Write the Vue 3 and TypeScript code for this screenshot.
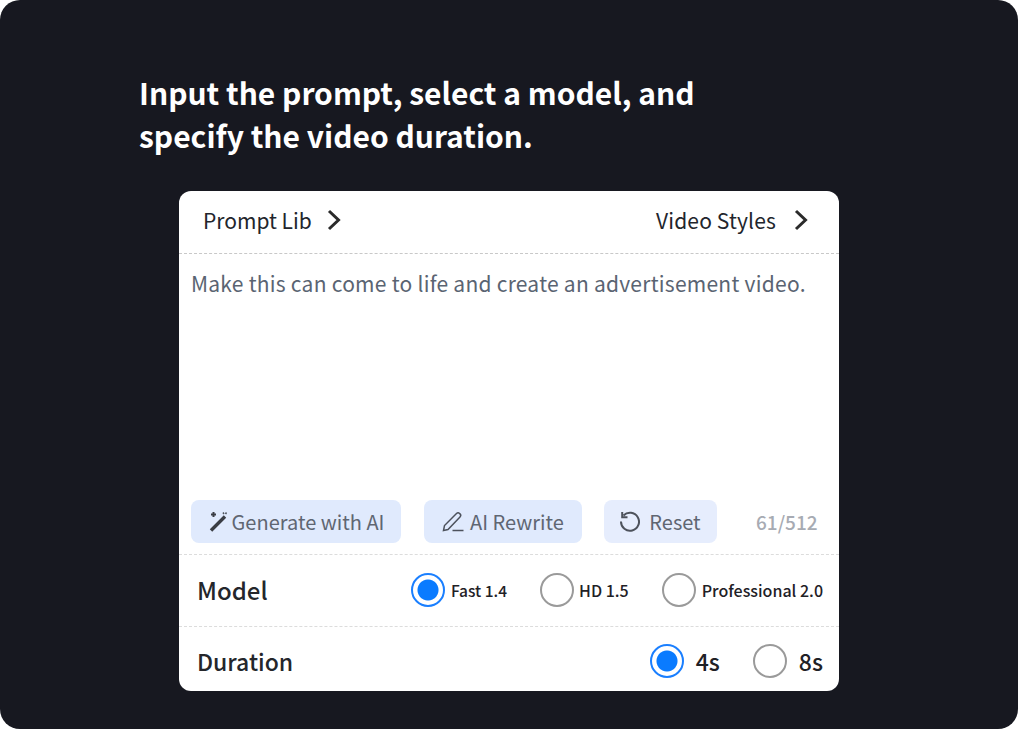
<script setup lang="ts">
const models = [
  { label: 'Fast 1.4', on: true },
  { label: 'HD 1.5', on: false },
  { label: 'Professional 2.0', on: false },
]
const durations = [
  { label: '4s', on: true },
  { label: '8s', on: false },
]
</script>

<template>
  <main class="frame">
    <h1 class="title">Input the prompt, select a model, and<br />specify the video duration.</h1>
    <section class="card">
      <header class="head">
        <div class="link">
          <span>Prompt Lib</span>
          <svg class="chev" viewBox="0 0 16 24"><path d="M3 3 12.500 12 3 21" /></svg>
        </div>
        <div class="link">
          <span>Video Styles</span>
          <svg class="chev" viewBox="0 0 16 24"><path d="M3 3 12.500 12 3 21" /></svg>
        </div>
      </header>
      <div class="prompt">
        <p class="text">Make this can come to life and create an advertisement video.</p>
        <div class="tools">
          <button class="btn b1">
            <svg class="ico i1" viewBox="0 0 20 24">
              <path class="thick" d="M3 21.500 17 7.500" />
              <path class="spark" d="M5.500 3v5M3 5.500h5" />
              <path class="thin" d="M15 3.500l1 1.500M18.500 3.500l-1 1.500" />
            </svg>
            <span>Generate with AI</span>
          </button>
          <button class="btn b2">
            <svg class="ico i2" viewBox="0 0 22 24">
              <path class="thin" d="M1.500 21.500 2.500 16.500 14.500 4.500a2.200 2.200 0 0 1 3.100 0l.4.400a2.200 2.200 0 0 1 0 3.100L6 20.500ZM10.500 21.500h11" />
            </svg>
            <span>AI Rewrite</span>
          </button>
          <button class="btn b3">
            <svg class="ico i3" viewBox="0 0 20 24">
              <path class="reset" d="M3.500 6.500A9 9 0 1 1 1 12.500M2.200 3v5.200H7.500" />
            </svg>
            <span>Reset</span>
          </button>
          <span class="count">61/512</span>
        </div>
      </div>
      <div class="row model">
        <span class="name">Model</span>
        <div class="opts">
          <label v-for="m in models" :key="m.label" class="opt">
            <i class="radio" :class="{ on: m.on }"></i>
            <span>{{ m.label }}</span>
          </label>
        </div>
      </div>
      <div class="row dur">
        <span class="name">Duration</span>
        <div class="opts">
          <label v-for="d in durations" :key="d.label" class="opt">
            <i class="radio" :class="{ on: d.on }"></i>
            <span>{{ d.label }}</span>
          </label>
        </div>
      </div>
    </section>
  </main>
</template>

<style scoped>
.frame {
  box-sizing: border-box;
  height: 729px;
  background: #171820;
  border-radius: 20px;
  padding: 71px 179px 0 139px;
  font-family: "Noto Sans CJK SC", "Noto Sans", sans-serif;
}
.title {
  margin: 0 0 34px;
  font-size: 30px;
  line-height: 43px;
  font-weight: 700;
  color: #fff;
  white-space: nowrap;
}
.card {
  box-sizing: border-box;
  margin-left: 40px;
  width: 660px;
  height: 500px;
  background: #fff;
  border-radius: 12px;
  overflow: hidden;
}
.head {
  box-sizing: border-box;
  height: 63px;
  display: flex;
  justify-content: space-between;
  align-items: center;
  padding: 0 30px 5px 24px;
  border-bottom: 1px dashed #c8c8c8;
}
.link {
  display: flex;
  align-items: center;
  gap: 14px;
  font-size: 21px;
  color: #22252c;
}
.link + .link { gap: 17px; letter-spacing: 0.15px; margin-right: 0; }
.chev {
  width: 16px;
  height: 24px;
  fill: none;
  stroke: #2b2b2b;
  stroke-width: 3;
}
.prompt {
  box-sizing: border-box;
  height: 301px;
  padding: 14px 12px 0;
  display: flex;
  flex-direction: column;
  border-bottom: 1px dashed #dcdcdc;
}
.text {
  margin: 0;
  font-size: 21px;
  line-height: 30px;
  letter-spacing: 0.25px;
  color: #5a6472;
  white-space: nowrap;
  flex: 1;
}
.tools {
  display: flex;
  align-items: center;
  margin-bottom: 11px;
}
.btn {
  height: 43px;
  border: 0;
  border-radius: 8px;
  background: #e0eafd;
  display: flex;
  align-items: center;
  justify-content: center;
  padding: 0 0 1px;
  font: inherit;
  font-size: 20px;
  color: #5f6672;
}
.b1 { width: 210px; margin-right: 23px; gap: 4px; }
.b2 { width: 158px; margin-right: 22px; gap: 6px; }
.b3 { width: 113px; background: #e6edfd; margin-right: 39px; gap: 9px; }
.ico { height: 24px; fill: none; flex: none; }
.i1, .i3 { width: 20px; }
.i2 { width: 22px; }
.thick { stroke: #3a3d44; stroke-width: 3.400; }
.spark { stroke: #3a3d44; stroke-width: 2; }
.thin { stroke: #4d525c; stroke-width: 1.500; }
.reset { stroke: #4d525c; stroke-width: 2; }
.count { font-size: 19px; font-weight: 500; color: #a7abb3; }
.row {
  box-sizing: border-box;
  display: flex;
  justify-content: space-between;
  align-items: center;
  padding: 0 16px 0 18px;
}
.model { height: 72px; padding-bottom: 2px; border-bottom: 1px dashed #dcdcdc; }
.dur { height: 64px; padding-top: 4px; }
.name { font-size: 23px; font-weight: 500; color: #24262b; }
.model .name { font-size: 24px; }
.opts { display: flex; align-items: center; gap: 33px; }
.opt { display: flex; align-items: center; gap: 5px; font-size: 16px; font-weight: 500; color: #1f2126; }
.model .opt:first-child { gap: 6px; font-size: 15.500px; }
.model .opt:last-child { gap: 6px; }
.dur .opts { gap: 33px; }
.dur .opt { gap: 12px; font-size: 23px; }
.radio {
  box-sizing: border-box;
  width: 34px;
  height: 34px;
  border-radius: 50%;
  border: 2px solid #9a9a9a;
  background: #fff;
  flex: none;
}
.radio.on {
  border-color: #1a7fff;
  background: radial-gradient(circle, #0a7bff 0 10px, #fff 11px);
}
</style>
<style>
html, body { background: #fff; }
</style>
